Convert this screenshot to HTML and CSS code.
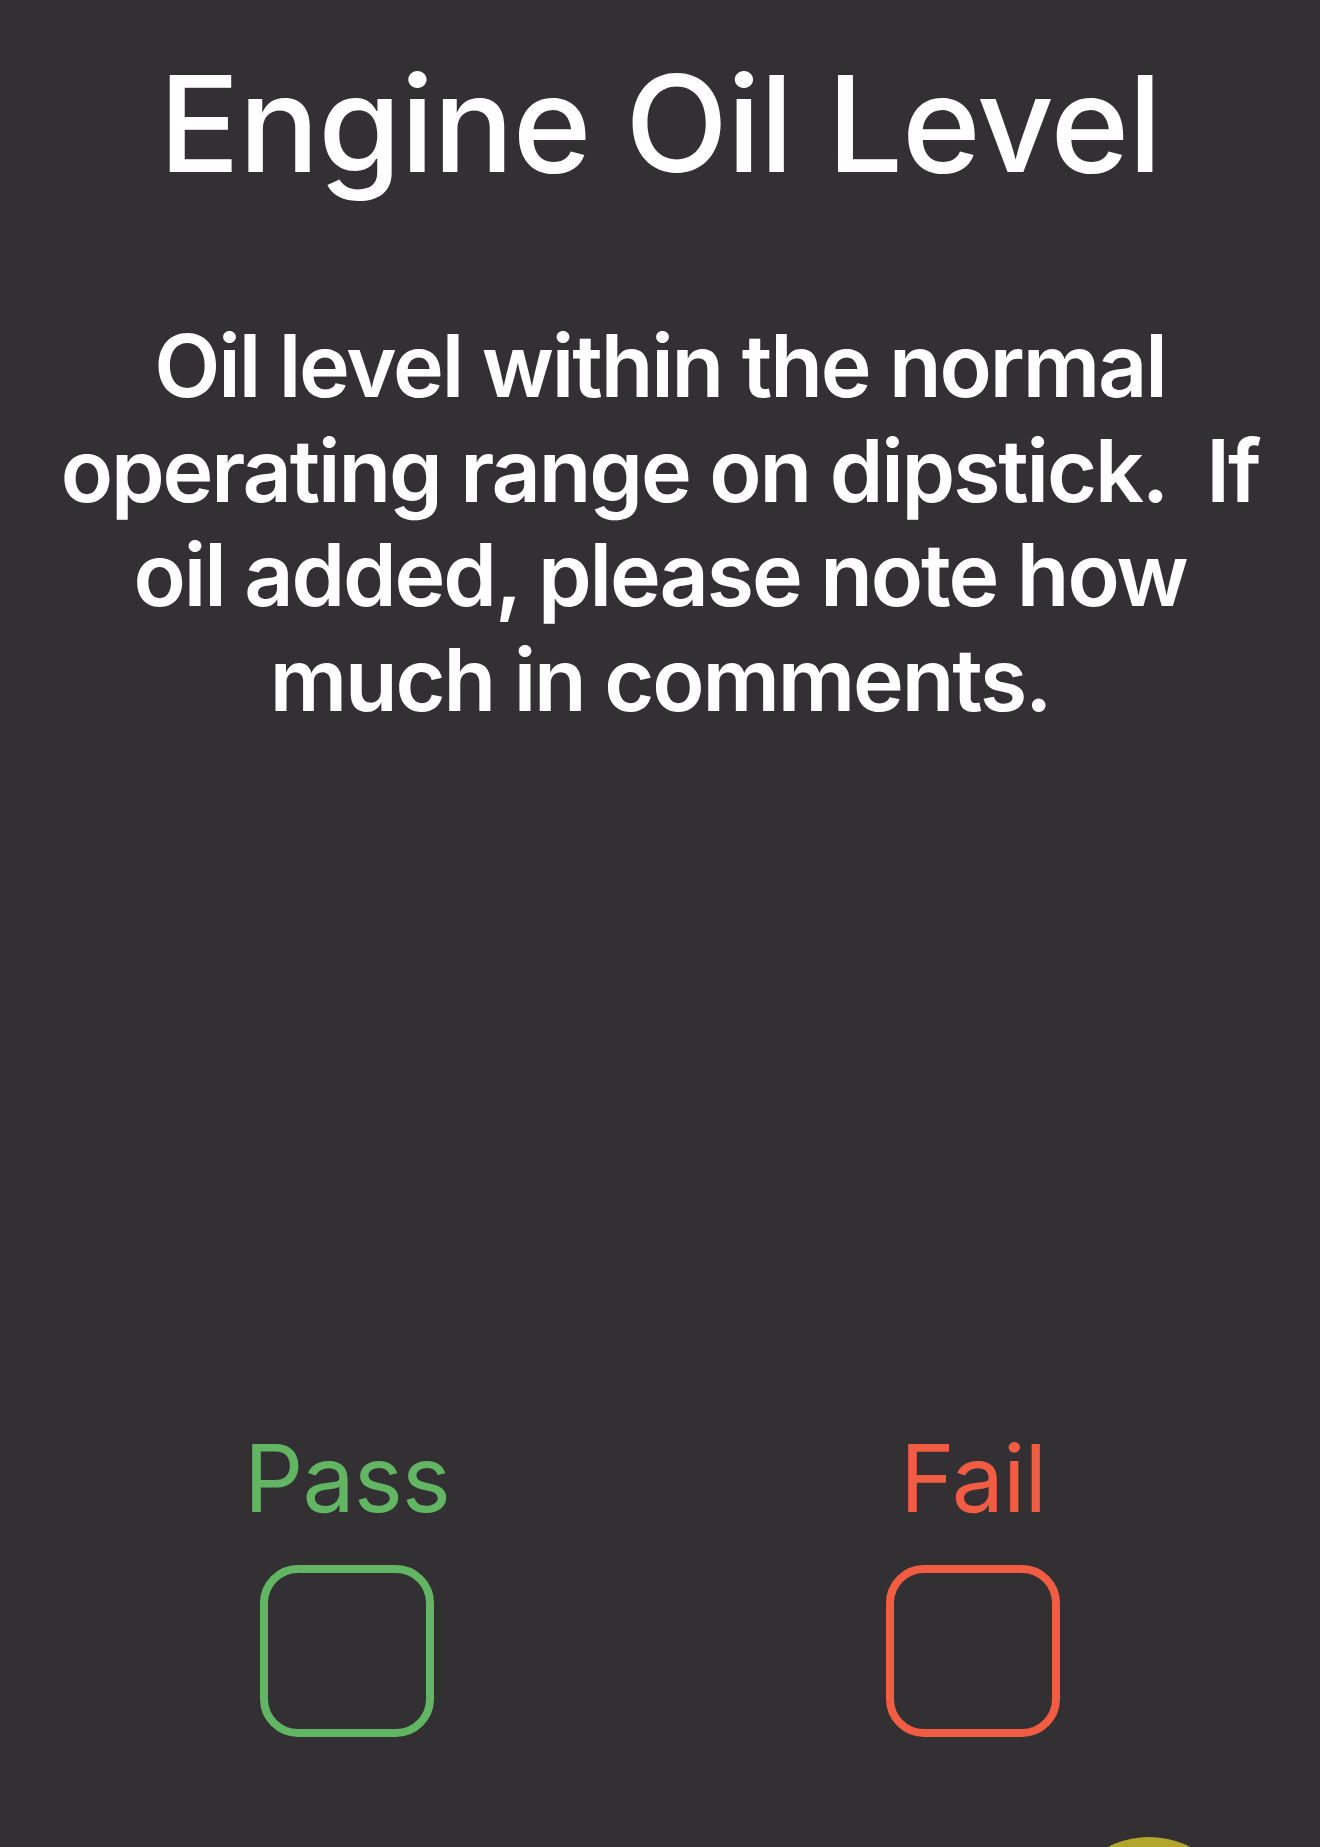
FILE: index.html
```html
<!DOCTYPE html>
<html lang="en">
<head>
<meta charset="utf-8">
<title>Engine Oil Level</title>
<link rel="stylesheet" href="styles.css">
</head>
<body>
<main class="screen">
  <h1 class="title">Engine Oil Level</h1>
  <p class="desc">Oil level within the normal<br>operating range on dipstick.&nbsp; If<br>oil added, please note how<br>much in comments.</p>
  <div class="spacer"></div>
  <div class="choices">
    <div class="choice pass">
      <span class="choice-label">Pass</span>
      <span class="checkbox"></span>
    </div>
    <div class="choice fail">
      <span class="choice-label">Fail</span>
      <span class="checkbox"></span>
    </div>
  </div>
  <span class="fab"></span>
</main>
</body>
</html>
```
FILE: styles.css
```css
html, body {
  margin: 0;
  padding: 0;
  background: #323033;
}
.screen {
  position: relative;
  width: 1320px;
  height: 1847px;
  overflow: hidden;
  display: flex;
  flex-direction: column;
  align-items: stretch;
  font-family: Inter, "Noto Sans", "Liberation Sans", sans-serif;
  color: #ffffff;
}
.title {
  margin: 48px 0 0;
  font-size: 134px;
  font-weight: 500;
  line-height: 150px;
  text-align: center;
  letter-spacing: -1px;
}
.desc {
  margin: 116px 0 0;
  font-size: 86px;
  font-weight: 600;
  line-height: 104.5px;
  text-align: center;
  letter-spacing: -2.1px;
}
.spacer {
  flex: 1;
}
.choices {
  display: grid;
  grid-template-columns: 1fr 1fr;
  padding: 0 34px 110px;
}
.choice {
  display: flex;
  flex-direction: column;
  align-items: center;
}
.choice-label {
  font-size: 93px;
  font-weight: 400;
  line-height: 110px;
  letter-spacing: -1px;
}
.checkbox {
  margin-top: 32px;
  width: 158px;
  height: 156px;
  border: 8px solid currentColor;
  border-radius: 38px;
}
.pass { color: #62b562; }
.fail { color: #f15c42; }
.fab {
  position: absolute;
  left: 1059px;
  top: 1837px;
  width: 180px;
  height: 180px;
  border-radius: 50%;
  background: #b3a62c;
}
```
